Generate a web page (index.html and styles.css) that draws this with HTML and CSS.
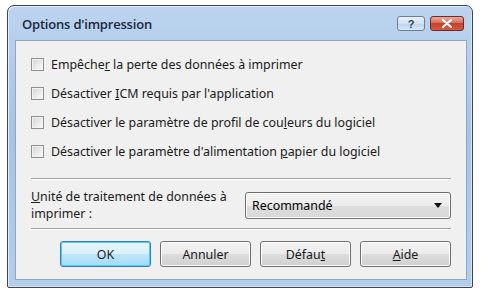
FILE: index.html
```html
<!DOCTYPE html>
<html lang="fr">
<head>
<meta charset="utf-8">
<title>Options d'impression</title>
<link rel="stylesheet" href="styles.css">
</head>
<body>
<div class="window">
  <div class="titlebar">
    <span class="title">Options d'impression</span>
    <div class="caption-buttons">
      <span class="cap help">?</span>
      <span class="cap close">
        <svg width="12" height="9" viewBox="0 0 12 9"><path d="M2 1 L10 8 M10 1 L2 8" stroke="#fff" stroke-width="2.2" stroke-linecap="round"/></svg>
      </span>
    </div>
  </div>
  <div class="client">
    <div class="checks">
      <label class="check"><span class="box"></span><span>Empêche<u>r</u> la perte des données à imprimer</span></label>
      <label class="check"><span class="box"></span><span>Désactiver <u>I</u>CM requis par l'application</span></label>
      <label class="check"><span class="box"></span><span>Désactiver le paramètre de profil de cou<u>l</u>eurs du logiciel</span></label>
      <label class="check"><span class="box"></span><span>Désactiver le paramètre d'alimentation <u>p</u>apier du logiciel</span></label>
    </div>
    <div class="sep"></div>
    <div class="unit-row">
      <div class="unit-label">
        <span><u>U</u>nité de traitement de données à</span>
        <span>imprimer :</span>
      </div>
      <div class="combo">
        <span>Recommandé</span>
        <svg width="8" height="5" viewBox="0 0 8 5"><path d="M0 0 H8 L4 5 Z" fill="#111"/></svg>
      </div>
    </div>
    <div class="sep sep2"></div>
    <div class="buttons">
      <span class="btn default">OK</span>
      <span class="btn">Annuler</span>
      <span class="btn">Défau<u>t</u></span>
      <span class="btn"><u>A</u>ide</span>
    </div>
  </div>
</div>
</body>
</html>
```
FILE: styles.css
```css
* {
  box-sizing: border-box;
}
html, body {
  margin: 0;
  padding: 0;
  background: #ffffff;
}
body {
  font-family: "Noto Sans", "Liberation Sans", sans-serif;
  font-size: 12.4px;
  color: #000;
}
.window {
  margin: 5px 0 0 7px;
  width: 466px;
  height: 283px;
  border: 1px solid #3e4652;
  border-radius: 7px 7px 2px 2px;
  background: linear-gradient(to bottom, #bcd4ee 0%, #a6c4e6 45%, #b2ceeb 100%);
  box-shadow: inset 1px 1px 0 #e2eefa, inset -1px -1px 0 #d4e4f4;
  padding: 0 5px 7px 7px;
  display: flex;
  flex-direction: column;
}
.titlebar {
  height: 34px;
  flex: none;
  display: flex;
  align-items: center;
  justify-content: space-between;
  padding-left: 7px;
}
.title {
  font-family: "Open Sans", "Noto Sans", sans-serif;
  font-size: 13px;
  font-weight: 600;
  color: #1b2840;
  letter-spacing: -0.2px;
  margin-top: 2px;
}
.caption-buttons {
  display: flex;
  gap: 5px;
  margin-right: 3px;
  margin-top: 1px;
}
.cap {
  height: 15px;
  border: 1px solid #6c7f96;
  border-radius: 3px;
  display: flex;
  align-items: center;
  justify-content: center;
}
.help {
  width: 28px;
  background: linear-gradient(to bottom, #e8f1fa 0%, #d0e1f2 50%, #bcd2ea 51%, #dae8f6 100%);
  font-family: "Liberation Sans", sans-serif;
  font-weight: bold;
  font-size: 11px;
  color: #34465c;
}
.close {
  width: 34px;
  border-color: #6d2c25;
  background: linear-gradient(to bottom, #e9a99c 0%, #d7705f 45%, #c6402c 50%, #d65a3e 100%);
}
.client {
  flex: 1;
  background: #f0f0f0;
  border: 1px solid #8fa6c0;
  padding: 15px 15px 0 15px;
  display: flex;
  flex-direction: column;
}
.checks {
  display: flex;
  flex-direction: column;
  gap: 13px;
}
.check {
  display: flex;
  align-items: center;
  gap: 7px;
  height: 16px;
  color: #1a1a1a;
}
.box {
  width: 13px;
  height: 13px;
  border: 1px solid #8e8f8f;
  background: linear-gradient(135deg, #d4d4d4 0%, #f0f0f0 70%, #fafafa 100%);
  box-shadow: inset 0 0 0 1px #f3f3f3;
}
.sep {
  margin-top: 19px;
  height: 2px;
  border-top: 1px solid #a0a0a0;
  border-bottom: 1px solid #ffffff;
}
.unit-row {
  display: flex;
  align-items: center;
  justify-content: space-between;
  margin-top: 10px;
  height: 30px;
}
.unit-label {
  display: flex;
  flex-direction: column;
  line-height: 17px;
  color: #1a1a1a;
}
.combo {
  width: 206px;
  height: 27px;
  border: 1px solid #707070;
  border-radius: 3px;
  background: linear-gradient(to bottom, #f4f4f4 0%, #ececec 50%, #dddddd 51%, #d8d8d8 100%);
  box-shadow: inset 0 0 0 1px #fbfbfb;
  display: flex;
  align-items: center;
  justify-content: space-between;
  padding: 0 8px 0 6px;
}
.sep2 {
  margin-top: 8px;
}
.buttons {
  display: flex;
  justify-content: flex-end;
  gap: 9px;
  margin-top: 11px;
}
.btn {
  width: 91px;
  height: 26px;
  border: 1px solid #707070;
  border-radius: 3px;
  background: linear-gradient(to bottom, #f2f2f2 0%, #ebebeb 50%, #dddddd 51%, #cfcfcf 100%);
  box-shadow: inset 0 0 0 1px #fcfcfc;
  display: flex;
  align-items: center;
  justify-content: center;
  color: #1a1a1a;
}
.btn.default {
  border-color: #3c7fb1;
  box-shadow: inset 0 0 0 1px #48d1f8, 0 0 1px #9cd2f2;
  background: linear-gradient(to bottom, #eaf6fd 0%, #d9f0fc 50%, #bee6fd 51%, #a7d9f5 100%);
}
```
